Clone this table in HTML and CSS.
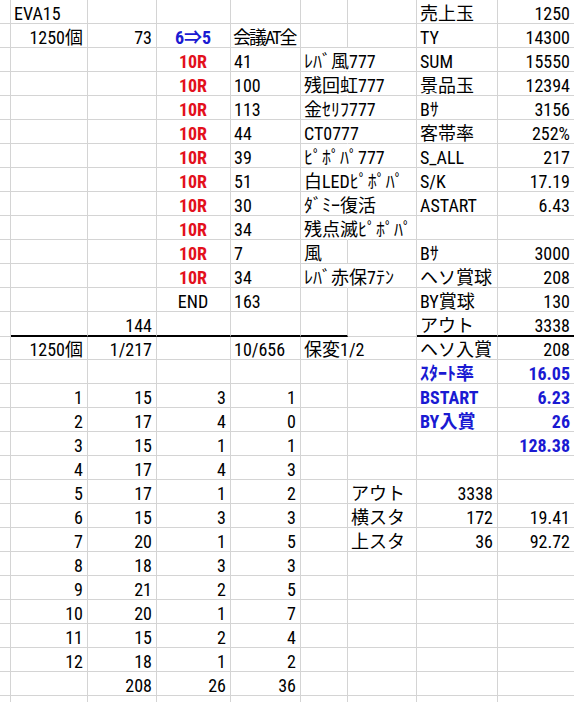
FILE: index.html
```html
<!DOCTYPE html>
<html lang="ja">
<head>
<meta charset="utf-8">
<title>EVA15</title>
<link rel="stylesheet" href="styles.css">
</head>
<body>
<div class="sheet">
  <div class="r"><span></span><span>EVA15</span><span></span><span></span><span></span><span></span><span></span><span>売上玉</span><span class="n">1250</span></div>
  <div class="r"><span></span><span class="n">1250個</span><span class="n">73</span><span class="c blue">6⇒5</span><span class="tight">会議AT全</span><span></span><span></span><span>TY</span><span class="n">14300</span></div>
  <div class="r"><span></span><span></span><span></span><span class="c red">10R</span><span>41</span><span class="sp">ﾚﾊﾞ風777</span><span></span><span>SUM</span><span class="n">15550</span></div>
  <div class="r"><span></span><span></span><span></span><span class="c red">10R</span><span>100</span><span class="sp">残回虹777</span><span></span><span>景品玉</span><span class="n">12394</span></div>
  <div class="r"><span></span><span></span><span></span><span class="c red">10R</span><span>113</span><span class="sp">金ｾﾘﾌ777</span><span></span><span>Bｻ</span><span class="n">3156</span></div>
  <div class="r"><span></span><span></span><span></span><span class="c red">10R</span><span>44</span><span class="sp">CT0777</span><span></span><span>客帯率</span><span class="n">252%</span></div>
  <div class="r"><span></span><span></span><span></span><span class="c red">10R</span><span>39</span><span class="sp">ﾋﾟﾎﾟﾊﾟ777</span><span></span><span>S_ALL</span><span class="n">217</span></div>
  <div class="r"><span></span><span></span><span></span><span class="c red">10R</span><span>51</span><span class="sp">白LEDﾋﾟﾎﾟﾊﾟ</span><span></span><span>S/K</span><span class="n">17.19</span></div>
  <div class="r"><span></span><span></span><span></span><span class="c red">10R</span><span>30</span><span class="sp">ﾀﾞﾐｰ復活</span><span></span><span>ASTART</span><span class="n">6.43</span></div>
  <div class="r"><span></span><span></span><span></span><span class="c red">10R</span><span>34</span><span class="sp">残点滅ﾋﾟﾎﾟﾊﾟ</span><span></span><span></span><span></span></div>
  <div class="r"><span></span><span></span><span></span><span class="c red">10R</span><span>7</span><span>風</span><span></span><span>Bｻ</span><span class="n">3000</span></div>
  <div class="r"><span></span><span></span><span></span><span class="c red">10R</span><span>34</span><span class="sp">ﾚﾊﾞ赤保7ﾃﾝ</span><span></span><span>ヘソ賞球</span><span class="n">208</span></div>
  <div class="r"><span></span><span></span><span></span><span class="c">END</span><span>163</span><span></span><span></span><span>BY賞球</span><span class="n">130</span></div>
  <div class="r thick"><span></span><span class="tb"></span><span class="n tb">144</span><span class="tb"></span><span class="tb"></span><span class="tb"></span><span></span><span class="tb">アウト</span><span class="n tb">3338</span></div>
  <div class="r after"><span></span><span class="n">1250個</span><span class="n">1/217</span><span></span><span>10/656</span><span class="sp">保変1/2</span><span></span><span>ヘソ入賞</span><span class="n">208</span></div>
  <div class="r"><span></span><span></span><span></span><span></span><span></span><span></span><span></span><span class="blue">ｽﾀｰﾄ率</span><span class="n blue">16.05</span></div>
  <div class="r"><span></span><span class="n">1</span><span class="n">15</span><span class="n">3</span><span class="n">1</span><span></span><span></span><span class="blue">BSTART</span><span class="n blue">6.23</span></div>
  <div class="r"><span></span><span class="n">2</span><span class="n">17</span><span class="n">4</span><span class="n">0</span><span></span><span></span><span class="blue">BY入賞</span><span class="n blue">26</span></div>
  <div class="r"><span></span><span class="n">3</span><span class="n">15</span><span class="n">1</span><span class="n">1</span><span></span><span></span><span></span><span class="n blue">128.38</span></div>
  <div class="r"><span></span><span class="n">4</span><span class="n">17</span><span class="n">4</span><span class="n">3</span><span></span><span></span><span></span><span></span></div>
  <div class="r"><span></span><span class="n">5</span><span class="n">17</span><span class="n">1</span><span class="n">2</span><span></span><span>アウト</span><span class="n">3338</span><span></span></div>
  <div class="r"><span></span><span class="n">6</span><span class="n">15</span><span class="n">3</span><span class="n">3</span><span></span><span>横スタ</span><span class="n">172</span><span class="n">19.41</span></div>
  <div class="r"><span></span><span class="n">7</span><span class="n">20</span><span class="n">1</span><span class="n">5</span><span></span><span>上スタ</span><span class="n">36</span><span class="n">92.72</span></div>
  <div class="r"><span></span><span class="n">8</span><span class="n">18</span><span class="n">3</span><span class="n">3</span><span></span><span></span><span></span><span></span></div>
  <div class="r"><span></span><span class="n">9</span><span class="n">21</span><span class="n">2</span><span class="n">5</span><span></span><span></span><span></span><span></span></div>
  <div class="r"><span></span><span class="n">10</span><span class="n">20</span><span class="n">1</span><span class="n">7</span><span></span><span></span><span></span><span></span></div>
  <div class="r"><span></span><span class="n">11</span><span class="n">15</span><span class="n">2</span><span class="n">4</span><span></span><span></span><span></span><span></span></div>
  <div class="r"><span></span><span class="n">12</span><span class="n">18</span><span class="n">1</span><span class="n">2</span><span></span><span></span><span></span><span></span></div>
  <div class="r"><span></span><span></span><span class="n">208</span><span class="n">26</span><span class="n">36</span><span></span><span></span><span></span><span></span></div>
  <div class="r"><span></span><span></span><span></span><span></span><span></span><span></span><span></span><span></span><span></span></div>
</div>
</body>
</html>
```
FILE: styles.css
```css
html, body {
  margin: 0;
  padding: 0;
  background: #fff;
}
body {
  width: 574px;
  height: 702px;
  overflow: hidden;
  font-family: "Roboto Condensed", "Noto Sans CJK JP", sans-serif;
  font-size: 18px;
  color: #000;
}
.sheet {
  display: flex;
  flex-direction: column;
}
.r {
  display: grid;
  grid-template-columns: 11px 77px 69px 74px 70px 47px 69px 81px 77px;
  height: 24px;
  flex: none;
}
.r > span {
  box-sizing: border-box;
  border-right: 1px solid #d4d4d4;
  border-bottom: 1px solid #d4d4d4;
  display: flex;
  align-items: flex-end;
  white-space: nowrap;
  line-height: 18px;
  padding: 0 4px 0 3px;
  overflow: visible;
}
.r > .n {
  justify-content: flex-end;
}
.r > .c {
  justify-content: center;
}
.r > .sp {
  border-right-color: transparent;
}
.r > .tight {
  letter-spacing: -2px;
  padding-left: 2px;
}
.red {
  color: #e3101c;
  font-weight: bold;
}
.blue {
  color: #1a1ad2;
  font-weight: bold;
}
.r.thick {
  height: 25px;
}
.r.thick > .tb {
  border-bottom: 2px solid #000;
}
.r.after {
  height: 23px;
}
```
